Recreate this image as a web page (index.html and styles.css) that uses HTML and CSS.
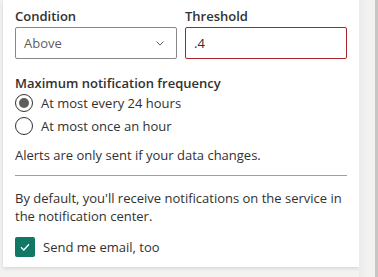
FILE: index.html
```html
<!DOCTYPE html>
<html lang="en">
<head>
    <meta charset="UTF-8">
    <meta name="viewport" content="width=device-width, initial-scale=1.0">
    <title>Alert settings</title>
    <link rel="stylesheet" href="styles.css">
</head>
<body>
    <div class="page">
        <div class="gutter-left"></div>

        <div class="panel">
            <div class="fields">
                <div class="field">
                    <label class="field-label">Condition</label>
                    <div class="dropdown">
                        <span>Above</span>
                        <svg class="chevron" width="12" height="12" viewBox="0 0 12 12">
                            <path d="M2.5 4.5 L6 8 L9.5 4.5" fill="none" stroke="#605e5c" stroke-width="1"/>
                        </svg>
                    </div>
                </div>
                <div class="field">
                    <label class="field-label">Threshold</label>
                    <div class="text-input error">.4</div>
                </div>
            </div>

            <div class="group-label">Maximum notification frequency</div>
            <div class="radio-list">
                <div class="radio-row">
                    <span class="radio checked"></span>
                    <span>At most every 24 hours</span>
                </div>
                <div class="radio-row">
                    <span class="radio"></span>
                    <span>At most once an hour</span>
                </div>
            </div>

            <p class="note">Alerts are only sent if your data changes.</p>
            <hr class="divider">
            <p class="note wrap">By default, you'll receive notifications on the service in the notification center.</p>

            <div class="check-row">
                <span class="checkbox">
                    <svg width="12" height="12" viewBox="0 0 12 12">
                        <path d="M2 6.3 L4.8 9 L10 3.2" fill="none" stroke="#fff" stroke-width="1.3"/>
                    </svg>
                </span>
                <span>Send me email, too</span>
            </div>
        </div>

        <div class="gutter-right">
            <div class="scroll-edge"></div>
        </div>
    </div>
</body>
</html>
```

FILE: styles.css
```css
body {
    margin: 0;
    font-family: "Open Sans", "Noto Sans", Arial, sans-serif;
    font-size: 13px;
    color: #323130;
    background-color: #f3f2f1;
}
.page {
    display: flex;
    height: 277px;
    overflow: hidden;
}
.gutter-left {
    width: 3px;
    background-color: #f3f2f1;
}
.panel {
    width: 332px;
    height: 261px;
    padding: 6px 12px 0 12px;
    background-color: #fff;
    box-shadow: 0 1.6px 3.6px rgba(0, 0, 0, 0.13), 0 0.3px 0.9px rgba(0, 0, 0, 0.11);
}
.gutter-right {
    flex: 1;
    display: flex;
    justify-content: flex-end;
    background: linear-gradient(to right, #ebebeb, #f1f1f1 40%, #f1f1f1);
}
.scroll-edge {
    width: 3px;
    background-color: #c8c6c4;
}
.fields {
    display: grid;
    grid-template-columns: 1fr 1fr;
    gap: 8px;
}
.field-label {
    display: block;
    font-weight: 600;
    line-height: 20px;
    margin-bottom: 1px;
}
.dropdown {
    display: flex;
    align-items: center;
    justify-content: space-between;
    height: 30px;
    padding: 0 8px;
    border: 1px solid #8a8886;
    border-radius: 2px;
    color: #605e5c;
}
.chevron {
    margin-right: 2px;
}
.text-input {
    display: flex;
    align-items: center;
    height: 30px;
    padding: 0 8px;
    border: 1px solid #a4262c;
    border-radius: 2px;
}
.group-label {
    margin-top: 14px;
    line-height: 20px;
    font-weight: 600;
}
.radio-list {
    display: flex;
    flex-direction: column;
    gap: 3px;
}
.radio-row {
    display: flex;
    align-items: center;
    gap: 8px;
    line-height: 20px;
}
.radio {
    box-sizing: border-box;
    width: 18px;
    height: 18px;
    border: 1px solid #323130;
    border-radius: 50%;
    display: flex;
    align-items: center;
    justify-content: center;
}
.radio.checked::after {
    content: "";
    width: 10px;
    height: 10px;
    border-radius: 50%;
    background-color: #605e5c;
}
.note {
    margin: 10px 0 0 0;
    line-height: 18px;
}
.note.wrap {
    margin-top: 13px;
}
.divider {
    margin: 11px 0 0 0;
    border: none;
    border-top: 1px solid #a19f9d;
}
.check-row {
    display: flex;
    align-items: center;
    gap: 8px;
    margin-top: 12px;
}
.checkbox {
    box-sizing: border-box;
    width: 20px;
    height: 20px;
    border-radius: 2px;
    background-color: #117865;
    display: flex;
    align-items: center;
    justify-content: center;
}
```
